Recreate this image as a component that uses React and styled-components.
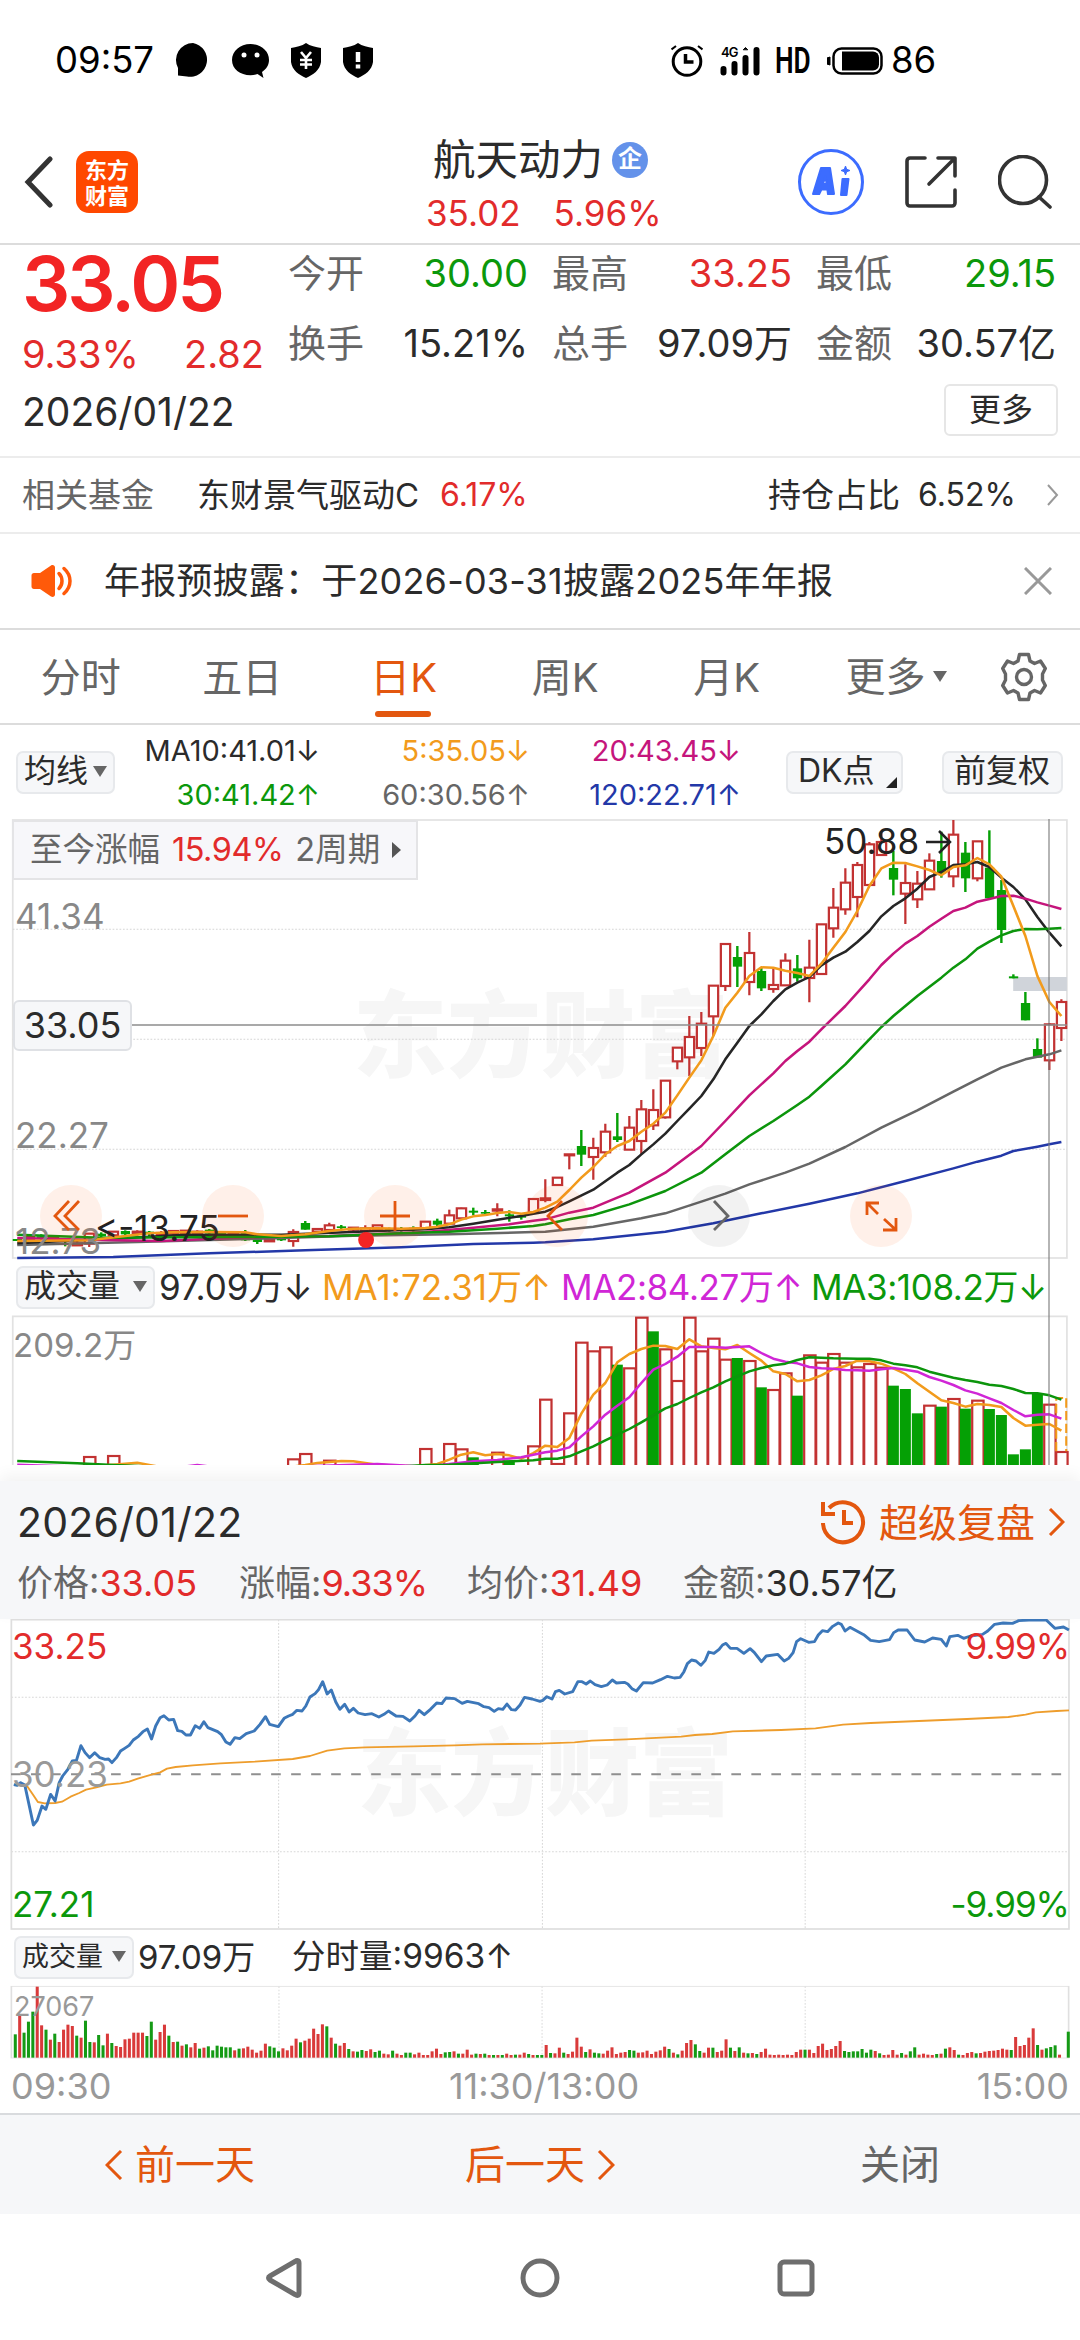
import React from 'react';
import styled, { createGlobalStyle } from 'styled-components';

const RED = '#e22b2b';
const GREEN = '#0b980b';
const ORANGE = '#e3570f';
const DARK = '#2b2b2b';
const GREY = '#666';

// chart data, one slot per trading day
const FIRST_X = 50;
const STEP = 34.85;
const dayX = i => FIRST_X + i * STEP;

// [day, up, body top, body bottom, high, low]
const CANDLES = [
    [0, 0, 1284, 1290, 1284, 1290], [1, 1, 1278, 1284, 1274, 1288], [2, 0, 1276, 1284, 1270, 1290], [3, 1, 1280, 1288, 1276, 1292],
    [4, 0, 1296, 1301, 1290, 1306], [5, 1, 1297, 1303, 1290, 1303], [6, 1, 1268, 1298, 1266, 1308], [7, 0, 1268, 1276, 1264, 1280],
    [8, 1, 1262, 1273, 1262, 1273], [9, 0, 1260, 1270, 1258, 1272], [10, 1, 1262, 1268, 1258, 1274], [11, 0, 1262, 1268, 1260, 1276],
    [12, 1, 1266, 1272, 1260, 1280], [13, 1, 1260, 1268, 1258, 1274], [14, 1, 1259, 1266, 1257, 1270], [15, 1, 1262, 1268, 1258, 1270],
    [16, 0, 1256, 1268, 1254, 1272], [17, 0, 1264, 1270, 1260, 1276], [18, 1, 1268, 1274, 1262, 1280], [19, 0, 1266, 1288, 1257, 1290],
    [20, 0, 1282, 1293, 1278, 1299], [21, 1, 1287, 1291, 1280, 1291], [22, 0, 1280, 1288, 1276, 1290], [23, 1, 1263, 1290, 1255, 1307],
    [24, 0, 1236, 1256, 1230, 1256], [25, 1, 1254, 1262, 1252, 1268], [26, 1, 1243, 1257, 1235, 1262], [27, 0, 1246, 1251, 1242, 1254],
    [28, 1, 1250, 1256, 1248, 1262], [29, 1, 1252, 1260, 1243, 1266], [30, 1, 1243, 1254, 1243, 1258], [31, 0, 1252, 1258, 1250, 1262],
    [32, 0, 1252, 1258, 1248, 1262], [33, 0, 1250, 1257, 1246, 1262], [34, 1, 1232, 1254, 1232, 1254], [35, 0, 1229, 1241, 1223, 1247],
    [36, 1, 1213, 1238, 1196, 1238], [37, 1, 1192, 1222, 1190, 1222], [38, 0, 1199, 1205, 1190, 1213], [39, 0, 1203, 1208, 1197, 1215],
    [40, 1, 1195, 1199, 1177, 1216], [41, 0, 1210, 1216, 1198, 1232], [42, 0, 1214, 1220, 1210, 1226], [43, 1, 1164, 1204, 1164, 1204],
    [44, 1, 1162, 1167, 1105, 1174], [45, 1, 1100, 1122, 1100, 1122], [46, 1, 1030, 1033, 1030, 1075], [47, 0, 1005, 1031, 957, 1065],
    [48, 1, 1011, 1038, 980, 1106], [49, 1, 962, 1024, 938, 1037], [50, 0, 976, 987, 906, 993], [51, 1, 950, 1016, 915, 1016],
    [52, 1, 895, 990, 867, 1030], [53, 1, 897, 943, 835, 957], [54, 1, 809, 919, 809, 923], [55, 1, 710, 751, 710, 775],
    [56, 1, 678, 739, 615, 795], [57, 1, 638, 711, 603, 735], [58, 1, 524, 616, 524, 675], [59, 1, 399, 525, 399, 540],
    [60, 0, 438, 467, 405, 528], [61, 1, 426, 513, 363, 553], [62, 0, 480, 532, 470, 540], [63, 1, 522, 534, 472, 545],
    [64, 1, 449, 523, 427, 523], [65, 0, 472, 502, 432, 512], [66, 1, 470, 501, 386, 574], [67, 1, 340, 489, 340, 489],
    [68, 1, 290, 352, 231, 380], [69, 1, 215, 295, 172, 311], [70, 1, 162, 258, 153, 319], [71, 1, 100, 222, 93, 222],
    [72, 1, 93, 132, 62, 132], [73, 0, 171, 206, 120, 253], [74, 1, 216, 248, 160, 339], [75, 1, 218, 265, 180, 291],
    [76, 1, 149, 235, 127, 235], [77, 0, 150, 187, 62, 200], [78, 1, 71, 196, 27, 229], [79, 0, 125, 202, 93, 243],
    [80, 1, 91, 202, 91, 211], [81, 0, 170, 262, 58, 262], [82, 0, 237, 357, 207, 396], [83, 0, 496, 502, 490, 502],
    [84, 0, 576, 628, 543, 628], [85, 0, 714, 740, 682, 740], [86, 1, 640, 748, 636, 777], [87, 1, 573, 651, 565, 690]
];

const AVERAGES = [
    ['#2338a8', '0:1341 8:1338 16:1327 24:1318 32:1309 38:1299 43:1295 44:1294 48:1285 54:1262 58:1237 62:1207 66:1178 70:1147 74:1110 78:1072 80:1052 82:1034 83:1020 85:1007 86:1000 87:993'],
    ['#666', '0:1302 10:1293 20:1283 28:1274 36:1270 43:1263 44:1262 48:1247 52:1222 54:1207 57:1172 59:1148 61:1120 64:1085 66:1058 69:1008 72:950 75:898 78:842 80:805 82:770 84:745 86:730 87:718'],
    ['#262626', '0:1297 8:1283 14:1271 22:1271 30:1260 34:1255 36:1249 38:1238 40:1226 42:1215 43:1208 44:1202 45:1188 46:1171 48:1136 50:1085 51:1062 52:1030 53:1000 54:968 55:930 56:893 57:855 58:805 59:745 60:695 61:645 62:610 63:570 64:535 65:515 66:498 67:463 68:440 69:422 70:393 71:360 72:316 73:285 74:262 75:233 76:198 77:183 78:162 79:160 80:153 81:168 82:200 83:228 84:265 85:318 86:365 87:406'],
    ['#c5157c', '0:1281 6:1286 12:1290 18:1280 26:1275 34:1263 38:1250 41:1240 43:1229 44:1225 46:1205 48:1190 51:1145 54:1085 57:1005 59:930 61:853 63:787 64:750 65:720 66:692 67:655 69:585 71:505 72:462 73:428 74:398 75:375 76:347 77:323 78:300 79:290 80:272 81:264 82:255 83:254 84:263 85:274 86:284 87:294'],
    ['#0c950c', '0:1271 7:1280 14:1279 20:1278 26:1276 32:1267 36:1262 40:1253 43:1245 44:1240 46:1225 48:1212 51:1180 54:1140 57:1085 59:1030 61:975 63:930 65:882 66:857 67:825 69:760 71:685 72:648 73:615 75:555 77:500 78:470 79:445 80:413 81:392 82:373 83:360 84:354 85:355 86:353 87:351'],
    ['#f29b1c', '0:1290 6:1288 9:1275 11:1267 13:1264 16:1263 19:1264 20:1270 22:1275 24:1270 26:1260 27:1256 28:1253 30:1252 32:1253 34:1251 35:1247 36:1240 37:1226 38:1216 39:1212 40:1206 41:1203 42:1208 43:1203 44:1190 45:1172 46:1137 47:1100 48:1068 49:1030 50:1005 51:990 52:962 53:938 54:905 55:853 56:800 57:748 58:675 59:590 60:545 61:495 62:469 63:470 64:479 65:486 66:495 67:458 68:410 69:363 70:300 71:225 72:172 73:155 74:156 75:166 76:177 77:193 78:168 79:163 80:141 81:160 82:197 83:285 84:375 85:495 86:573 87:615']
];

// [day, up, top]
const VOLUMES = [
    [6, 1, 615], [8, 1, 612], [23, 1, 622], [24, 1, 606], [26, 1, 626], [34, 1, 591], [36, 1, 576], [37, 1, 592], [38, 0, 618],
    [40, 1, 602], [41, 0, 627], [43, 1, 583], [44, 1, 443], [45, 1, 636], [46, 1, 484], [47, 1, 272], [48, 1, 298], [49, 1, 286],
    [50, 0, 340], [51, 1, 349], [52, 1, 197], [53, 0, 240], [54, 1, 292], [55, 1, 387], [56, 1, 197], [57, 1, 298], [58, 1, 260],
    [59, 1, 323], [60, 0, 320], [61, 1, 327], [62, 0, 408], [63, 1, 414], [64, 1, 364], [65, 0, 433], [66, 1, 310], [67, 1, 332],
    [68, 1, 306], [69, 1, 332], [70, 1, 346], [71, 1, 336], [72, 1, 347], [73, 0, 403], [74, 0, 413], [75, 0, 486], [76, 1, 461],
    [77, 0, 466], [78, 1, 441], [79, 0, 472], [80, 1, 446], [81, 0, 473], [82, 0, 491], [83, 0, 609], [84, 0, 594], [85, 0, 427],
    [86, 1, 458], [87, 1, 600]
];

const VOLUME_AVERAGES = [
    ['#f29b1c', '0:660 8:640 9:637 10:634 11:641 14:660 22:650 24:641 25:635 27:629 28:630 30:640 33:645 35:638 36:625 37:610 38:603 39:612 40:608 41:612 42:622 43:605 44:583 45:587 46:560 47:487 48:430 49:395 50:333 51:308 52:293 53:283 54:284 55:293 56:264 57:285 58:290 59:294 60:281 61:305 62:328 63:360 64:368 65:390 66:386 67:372 68:353 69:344 70:328 71:330 72:337 73:351 74:368 75:396 76:421 77:447 78:455 79:466 80:458 81:461 82:467 83:500 84:523 85:520 86:518 87:538'],
    ['#d026d6', '0:640 3:644 13:650 15:641 17:650 24:645 30:638 34:646 36:638 38:630 40:626 42:618 43:610 44:603 45:598 46:588 47:555 48:525 49:490 50:463 51:438 52:395 53:355 54:338 55:316 56:287 57:287 58:287 59:289 60:287 61:285 62:305 63:322 64:331 65:336 66:347 67:351 68:352 69:356 70:357 71:358 72:354 73:350 74:355 75:361 76:377 77:388 78:401 79:417 80:427 81:441 82:455 83:476 84:495 85:490 86:489 87:502'],
    ['#0c950c', '0:629 5:636 8:641 14:650 30:650 34:641 36:640 40:632 43:627 44:622 45:622 46:615 47:600 48:585 49:567 50:550 51:533 52:513 53:492 54:471 55:458 56:440 57:423 58:408 59:390 60:375 61:360 62:350 63:342 64:337 65:326 66:318 68:321 70:322 71:322 72:327 73:337 74:342 75:348 76:361 77:370 78:379 79:386 80:392 81:400 82:404 83:413 84:425 85:426 86:432 87:445']
];

const MINUTE_PRICE = '40,551 50,553 60,545 72,552 97,672 108,658 122,615 133,625 147,580 160,600 172,545 182,525 197,505 210,480 222,478 235,434 247,455 260,470 275,455 290,470 305,475 315,474 325,485 338,470 350,450 362,442 375,433 387,417 402,406 415,392 428,384 440,414 452,375 465,350 476,344 490,357 504,355 516,389 528,391 540,402 553,402 567,374 580,382 592,362 604,380 618,386 632,392 643,401 656,423 668,430 682,410 696,413 715,398 738,390 755,370 771,347 783,370 808,377 825,352 838,345 850,340 862,328 877,330 888,315 900,288 915,278 925,266 937,242 950,279 962,267 975,303 987,325 1001,310 1014,333 1026,322 1040,336 1060,341 1080,338 1100,348 1115,340 1128,330 1150,345 1170,346 1190,360 1205,345 1217,328 1232,341 1250,325 1268,306 1283,308 1295,291 1320,293 1342,307 1357,301 1390,308 1405,317 1420,320 1435,331 1447,323 1460,325 1472,309 1485,326 1497,327 1510,312 1523,289 1545,294 1568,301 1576,298 1588,287 1603,294 1613,272 1624,268 1640,279 1663,272 1678,242 1690,242 1702,249 1714,240 1728,251 1746,257 1763,252 1778,237 1790,246 1813,244 1823,249 1835,263 1848,270 1868,245 1895,246 1918,236 1938,226 1958,231 1975,229 1986,212 1996,188 2008,177 2021,180 2035,193 2048,178 2058,153 2073,157 2088,145 2098,132 2108,127 2121,142 2140,142 2160,157 2178,143 2190,154 2211,182 2225,165 2258,160 2277,180 2290,172 2303,155 2313,122 2325,113 2348,124 2365,122 2376,102 2388,89 2403,92 2418,76 2434,66 2443,70 2454,90 2468,79 2488,90 2508,101 2528,118 2553,122 2583,116 2595,95 2608,87 2634,87 2645,102 2656,117 2685,123 2708,111 2733,115 2748,135 2758,107 2781,103 2798,112 2818,105 2853,100 2868,90 2888,70 2913,66 2940,67 2958,59 2988,57 3038,57 3063,82 3088,78 3104,87';
const MINUTE_AVERAGE = '60,550 80,557 95,580 110,603 130,607 160,606 180,602 205,587 230,576 250,566 280,559 310,551 350,547 375,542 400,533 440,521 465,514 485,503 510,498 560,493 640,487 740,482 850,474 900,465 950,449 1000,442 1060,439 1200,436 1320,433 1400,430 1568,428 1668,424 1718,419 1818,415 1978,407 2018,402 2068,399 2128,391 2268,387 2368,382 2448,371 2528,366 2668,360 2808,354 2928,348 2978,341 3008,334 3068,330 3104,328';

// one bar per minute, negative = sell side
const MINUTE_VOLUME = [
    -70, 125, -75, -108, -138, 213, 97, -84, 54, -72, 47, 84, 99, 95, -66, 60, -111, -47, 46, -68, -37, 72, -44, 35, 32, 55, 57, 75, 75, 75,
    -65, -108, 54, 77, 99, -66, 47, -48, 36, -40, 31, 44, -27, 30, -34, -22, -36, -33, -31, -31, 22, -27, 28, 33, 24, 15, 21, 42, -34, -30,
    -19, 28, 22, 36, 57, -46, 51, 57, 87, 71, 100, -94, 60, -42, 36, 44, -26, 19, -18, -23, 20, 25, -17, -21, 12, 10, -21, 12, 8, -15,
    -15, 10, 15, 8, 8, 19, 27, 11, -16, -17, 19, -12, 12, 24, 9, -12, 11, -12, 8, -8, 8, -8, 12, 8, -9, 9, 15, -11, 8, -8,
    -8, 38, -14, 13, 30, -15, 11, 18, 60, 33, -17, 25, -15, -13, 12, 21, 31, 11, 15, 17, -23, -21, 15, 16, 21, 11, 18, 22, 33, -26,
    15, -10, 21, 44, 53, -40, -20, 15, 30, -30, 17, 21, 55, -30, 20, -31, 15, -13, 14, -11, 17, 27, 9, 8, 9, 8, 9, 8, 17, 24,
    -24, 24, 14, 35, 42, 23, 26, 35, 50, -20, -17, -19, -19, -26, -15, -24, 20, -13, 8, 9, 23, 9, -14, 9, -19, -31, 9, 12, 9, 8,
    -11, 12, -27, 31, 23, -9, 8, 14, 17, -13, 14, 18, 20, 21, 23, 27, 24, -23, 62, 35, 38, 60, 88, -38, 24, -28, -32, -37, 9, 0, -78
];

const toPoints = line => line.split(' ').map(pair => {
    const [day, y] = pair.split(':');
    return `${dayX(Number(day))},${y}`;
}).join(' ');

const KLineChart = () => (
    <ChartSvg height="460" viewBox="0 0 3136 1380" preserveAspectRatio="none">
        <rect x="37" y="27" width="3061" height="1314" fill="none" stroke="#e2e2e2" strokeWidth="5" />
        {[355, 685, 1015].map(y => <line key={y} x1="37" x2="3098" y1={y} y2={y} stroke="#d5d5d5" strokeWidth="3" strokeDasharray="5 5" />)}
        <rect x="2942" y="498" width="156" height="42" fill="#d0d4da" />
        {CANDLES.map(([day, up, top, bottom, high, low]) => {
            const x = dayX(day);
            return up ? (
                <g key={day} stroke="#c23232" strokeWidth="6.500" fill="#fff">
                    <path d={`M${x} ${high}V${top}M${x} ${bottom}V${low}`} />
                    <rect x={x - 13} y={top} width="27" height={bottom - top} />
                </g>
            ) : (
                <g key={day} fill="#05a005">
                    <rect x={x - 3.5} y={high} width="7" height={low - high} />
                    <rect x={x - 13} y={top} width="27" height={bottom - top} />
                </g>
            );
        })}
        {AVERAGES.map(([color, line]) => (
            <polyline key={color} points={toPoints(line)} fill="none" stroke={color} strokeWidth="7.500" strokeLinejoin="round" />
        ))}
        <line x1="380" x2="3098" y1="642" y2="642" stroke="#8c8c8c" strokeWidth="5" />
        <ellipse cx="1063" cy="1287" rx="23" ry="24" fill="#f32424" />
    </ChartSvg>
);

const VolumeChart = () => (
    <ChartSvg height="150" viewBox="0 191 3136 450" preserveAspectRatio="none">
        <path d="M37 700V195H3098V700" fill="none" stroke="#e2e2e2" strokeWidth="5" />
        {VOLUMES.map(([day, up, top]) => (
            up ? <rect key={day} x={dayX(day) - 15} y={top + 2} width="33" height="600" fill="#fff" stroke="#c23232" strokeWidth="6.500" />
                : <rect key={day} x={dayX(day) - 16} y={top} width="32" height="600" fill="#05a005" />
        ))}
        <path d="M3067 600V440H3096V600" fill="none" stroke="#f29b1c" strokeWidth="6" strokeDasharray="28 10" />
        {VOLUME_AVERAGES.map(([color, line]) => (
            <polyline key={color} points={toPoints(line)} fill="none" stroke={color} strokeWidth="7.500" strokeLinejoin="round" />
        ))}
    </ChartSvg>
);

const MinuteChart = () => (
    <ChartSvg height="312" viewBox="0 54 3136 936" preserveAspectRatio="none">
        {[289, 752].map(y => <line key={y} x1="33" x2="3104" y1={y} y2={y} stroke="#d8d8d8" strokeWidth="3" strokeDasharray="5 5" />)}
        {[809, 1575, 2338].map(x => <line key={x} x1={x} x2={x} y1="56" y2="984" stroke="#d8d8d8" strokeWidth="3" strokeDasharray="5 5" />)}
        <rect x="33" y="56" width="3071" height="928" fill="none" stroke="#dedede" strokeWidth="5" />
        <line x1="32" x2="3104" y1="520" y2="520" stroke="#8f8f8f" strokeWidth="6" strokeDasharray="28 30.1" />
        <polyline points={MINUTE_AVERAGE} fill="none" stroke="#ee9d2c" strokeWidth="5.500" strokeLinejoin="round" />
        <polyline points={MINUTE_PRICE} fill="none" stroke="#3c77b9" strokeWidth="8.500" strokeLinejoin="round" />
    </ChartSvg>
);

const MinuteVolumeChart = () => (
    <ChartSvg height="74" viewBox="0 163 1568 222" preserveAspectRatio="none">
        {[405, 787, 1169].map(x => <line key={x} x1={x} x2={x} y1="167" y2="382" stroke="#dcdcdc" strokeWidth="1.5" strokeDasharray="5 5" />)}
        <rect x="16.5" y="167" width="1535" height="215" fill="none" stroke="#e0e0e0" strokeWidth="2.4" />
        {MINUTE_VOLUME.map((v, i) => (
            <rect key={i} x={20 + i * 6.37} y={381 - Math.abs(v)} width="4.4" height={Math.abs(v)} fill={v > 0 ? '#d93a3a' : '#159a15'} />
        ))}
    </ChartSvg>
);

const Chevron = ({ left, size = 16, height = 28, color = ORANGE, width = 3 }) => (
    <svg width={size} height={height} viewBox={`0 0 ${size} ${height}`} fill="none" stroke={color} strokeWidth={width}>
        <path d={left ? `M${size - 2} 1L2 ${height / 2}L${size - 2} ${height - 1}` : `M2 1L${size - 2} ${height / 2}L2 ${height - 1}`} />
    </svg>
);

const Shield = ({ children }) => (
    <svg width="30" height="35" viewBox="0 0 30 35">
        <path d="M15 0C11 3 5 4 0 5V19C1 27 8 32 15 35C22 32 29 27 30 19V5C25 4 19 3 15 0Z" fill="#000" />
        <g stroke="#fff" fill="none">{children}</g>
    </svg>
);

const StatusIcons = () => (
    <NoticeIcons>
        <svg width="34" height="35" viewBox="0 0 34 35"><path d="M17 0a17 17 0 1 1-6 33.500L2 32.500L2 25A17 17 0 0 1 17 0Z" /></svg>
        <svg width="37" height="35" viewBox="0 0 37 35">
            <path d="M18.500 1C29 1 37 8 37 17c0 5-2.500 9-7 12l1.500 6l-6-4c-2 .8-4.500 1.200-7 1.200C8 32.200 0 26 0 17S8 1 18.500 1Z" />
            <circle cx="12" cy="12" r="2.500" fill="#fff" /><circle cx="25" cy="12" r="2.500" fill="#fff" />
        </svg>
        <Shield><path d="M10 9l5 6l5-6M15 15v11M9 17h12M9 21.500h12" strokeWidth="2.600" /></Shield>
        <Shield><path d="M15 9v10M15 21.500v4" strokeWidth="4.500" /></Shield>
    </NoticeIcons>
);

const SystemIcons = () => (
    <SystemStatus>
        <svg width="32" height="32" viewBox="0 0 32 32" fill="none" stroke="#000" strokeWidth="3">
            <circle cx="16" cy="16.500" r="13.800" /><path d="M14.500 9v8h8" strokeWidth="3.500" /><path d="M0.500 4.500L5 1M31.500 4.500L27 1" strokeWidth="2" />
        </svg>
        <Signal>
            <SignalLabel>4G</SignalLabel>
            <svg width="40" height="30" viewBox="0 0 40 30" stroke="#000" strokeWidth="6" strokeLinecap="round">
                <path d="M3.500 23v3.500M14.500 18v8.500M25.500 12v14.500M36.500 4v22.500" /><path d="M23.500 3.500l2-2l2 2z" strokeWidth="1" />
            </svg>
        </Signal>
        <Hd>HD</Hd>
        <svg width="56" height="28" viewBox="0 0 56 28">
            <path d="M3 10v8a4 4 0 0 1 0-8Z" stroke="#000" />
            <rect x="6.500" y="1.500" width="48" height="25" rx="8" fill="none" stroke="#000" strokeWidth="2.500" />
            <path d="M15 4.500h31a6 6 0 0 1 6 6v7a6 6 0 0 1-6 6H15Z" />
        </svg>
        <Battery>86</Battery>
    </SystemStatus>
);

const ToolIcons = () => (
    <Tools>
        <AiBadge>
            <svg width="40" height="32" viewBox="0 0 40 32" fill="#3c6cff" stroke="#3c6cff" strokeLinejoin="round" strokeWidth="2">
                <path fillRule="evenodd" d="M10 2h9l4 26h-6l-.6-4.500h-6L8.200 28H2Zm4.500 8l-2.500 8h3.600Z" />
                <path d="M31.500 13h6l-2 16h-5.500Z" /><path d="M34.500 0l1.200 3.300l3.300 1.200l-3.300 1.200L34.500 9l-1.200-3.300L30 4.500l3.300-1.200Z" strokeWidth="1" />
            </svg>
        </AiBadge>
        <svg width="52" height="52" viewBox="0 0 52 52" fill="none" stroke="#333" strokeWidth="3.600" strokeLinecap="round" strokeLinejoin="round">
            <path d="M20 2H5a3 3 0 0 0-3 3v42a3 3 0 0 0 3 3h42a3 3 0 0 0 3-3V34M33 2h17v18M49 3L24 28" />
        </svg>
        <svg width="54" height="54" viewBox="0 0 54 54" fill="none" stroke="#333" strokeWidth="3.600" strokeLinecap="round">
            <circle cx="25" cy="25" r="23.500" /><path d="M41 42l11 10" />
        </svg>
    </Tools>
);

const Gear = () => (
    <svg width="50" height="50" viewBox="0 0 50 50" fill="none" stroke={GREY} strokeWidth="3.400" strokeLinejoin="round">
        <path d="M20.500 2.500h9l1.500 6.500l4.500 2.500l6-2.500l4.800 7.500l-2.800 5.500v6l2.800 5.500l-4.800 7.500l-6-2.500l-4.500 2.500l-1.500 6.500h-9l-1.500-6.500l-4.500-2.500l-6 2.500l-4.800-7.500l2.800-5.500v-6l-2.800-5.500l4.800-7.500l6 2.500l4.500-2.500Z" />
        <circle cx="25" cy="25" r="7.500" />
    </svg>
);

const Speaker = () => (
    <svg width="42" height="34" viewBox="0 0 42 34" fill="none" stroke="#ff5a0a" strokeWidth="3.500">
        <path d="M3 9h6L20 1.500c2-1 4 0 4 2v27c0 2-2 3-4 2L9 25H3c-1.500 0-2.500-1-2.500-2.500v-11C.5 10 1.500 9 3 9Z" fill="#ff5a0a" stroke="none" />
        <path d="M28 9.500c4 4 4 11 0 15M33 4.500c8 7 8 18 0 25" strokeLinecap="round" />
    </svg>
);

const CHART_BUTTONS = [
    ['first', 'M29 16L15 31L29 45M39 16L25 31L39 45'],
    ['minus', 'M16 31H46'],
    ['plus', 'M16 31H46M31 16V46'],
    ['prev', 'M36 16L22 31L36 45'],
    ['next', 'M26 16L40 31L26 45'],
    ['full', 'M17 30V18H29M17 18L28 29M33 45H46V33M46 45L34 34']
];

const TABS = ['分时', '五日', '日K', '周K', '月K'];

const App = () => (
    <Page>
        <GlobalStyle />
        <StatusBar>
            <Clock>09:57</Clock>
            <StatusIcons />
            <SystemIcons />
        </StatusBar>
        <Header>
            <BackGroup>
                <svg width="30" height="52" viewBox="0 0 30 52" fill="none" stroke="#333" strokeWidth="5" strokeLinecap="round">
                    <path d="M26 3L4 26L26 49" />
                </svg>
                <Brand>东方<br />财富</Brand>
            </BackGroup>
            <StockTitle>
                <StockName>航天动力<Company>企</Company></StockName>
                <StockPrice><span>35.02</span><span>5.96%</span></StockPrice>
            </StockTitle>
            <ToolIcons />
        </Header>
        <Quote>
            <QuoteMain>
                <Price>33.05</Price>
                <Change><span>9.33%</span><span>2.82</span></Change>
                <QuoteDate>2026/01/22</QuoteDate>
            </QuoteMain>
            <QuoteSide>
                <Stats>
                    <Stat>今开<Value color={GREEN}>30.00</Value></Stat>
                    <Stat>最高<Value color={RED}>33.25</Value></Stat>
                    <Stat>最低<Value color={GREEN}>29.15</Value></Stat>
                    <Stat>换手<Value>15.21%</Value></Stat>
                    <Stat>总手<Value>97.09万</Value></Stat>
                    <Stat>金额<Value>30.57亿</Value></Stat>
                </Stats>
                <MoreButton>更多</MoreButton>
            </QuoteSide>
        </Quote>
        <FundRow>
            <FundLabel>相关基金</FundLabel>
            <FundName>东财景气驱动C</FundName>
            <FundRate>6.17%</FundRate>
            <Holding>持仓占比</Holding>
            <HoldingRate>6.52%</HoldingRate>
            <Chevron size={13} height={22} color="#999" width={2} />
        </FundRow>
        <NoticeRow>
            <Speaker />
            <NoticeText>年报预披露：于2026-03-31披露2025年年报</NoticeText>
            <svg width="28" height="28" viewBox="0 0 28 28" stroke="#999" strokeWidth="3"><path d="M1 1L27 27M27 1L1 27" /></svg>
        </NoticeRow>
        <TabBar>
            {TABS.map(tab => <Tab key={tab} active={tab === '日K' ? 1 : 0}>{tab}</Tab>)}
            <MoreTab>更多<Triangle size={7} /></MoreTab>
            <Gear />
        </TabBar>
        <AverageRow>
            <Pill width={99}>均线<Triangle size={7} /></Pill>
            <AverageGrid>
                <Average color="#2b2b2b">MA10:41.01↓</Average>
                <Average color="#f29b1c">5:35.05↓</Average>
                <Average color="#c5157c">20:43.45↓</Average>
                <Average color={GREEN}>30:41.42↑</Average>
                <Average color={GREY}>60:30.56↑</Average>
                <Average color="#2338a8">120:22.71↑</Average>
            </AverageGrid>
            <PillGroup>
                <Pill width={117} pad={10}>DK点<Corner /></Pill>
                <Pill width={121} pad={10}>前复权</Pill>
            </PillGroup>
        </AverageRow>
        <KLineArea>
            <KLineBox>
                <Watermark top={170} left={353}>东方财富</Watermark>
                <KLineChart />
                <Period>至今涨幅<PeriodRate>15.94%</PeriodRate>2周期
                    <svg width="9" height="16" viewBox="0 0 9 16"><path d="M0 0L9 8L0 16Z" fill="#555" /></svg>
                </Period>
                <AxisLabel top={80} left={15}>41.34</AxisLabel>
                <AxisLabel top={299} left={15}>22.27</AxisLabel>
                <AxisLabel top={405} left={15}>12.73</AxisLabel>
                <CursorPrice>33.05</CursorPrice>
                <LowMark>&lt;-13.75</LowMark>
                <HighMark>50.88
                    <svg width="26" height="24" viewBox="0 0 26 24" fill="none" stroke="#222" strokeWidth="2.500"><path d="M0 12H24M13 1L24 12L13 23" /></svg>
                </HighMark>
                <ChartButtons>
                    {CHART_BUTTONS.map(([name, path]) => (
                        <ChartButton key={name} muted={name === 'next' ? 1 : 0}>
                            <svg width="62" height="62" viewBox="0 0 62 62" fill="none" strokeWidth="2.800"><path d={path} /></svg>
                        </ChartButton>
                    ))}
                </ChartButtons>
            </KLineBox>
            <VolumeHeader>
                <Pill width={139}>成交量<Triangle size={7} /></Pill>
                <VolumeText color="#2b2b2b" width={163}>97.09万↓</VolumeText>
                <VolumeText color="#f29b1c" width={239}>MA1:72.31万↑</VolumeText>
                <VolumeText color="#d026d6" width={250} tight={1}>MA2:84.27万↑</VolumeText>
                <VolumeText color={GREEN} tight={1}>MA3:108.2万↓</VolumeText>
            </VolumeHeader>
            <VolumeBox>
                <VolumeChart />
                <VolumeMax>209.2万</VolumeMax>
            </VolumeBox>
            <CrossLine />
        </KLineArea>
        <DayPanel>
            <DayHead>
                <DayDate>2026/01/22</DayDate>
                <Review>
                    <svg width="46" height="46" viewBox="0 0 46 46" fill="none" stroke={ORANGE} strokeWidth="4">
                        <path d="M3 24A20 20 0 1 0 9 9" /><path d="M3 3v12h12" /><path d="M24 11v13h9" />
                    </svg>
                    超级复盘
                    <Chevron size={17} height={28} />
                </Review>
            </DayHead>
            <DayStats>
                <span>价格:<Em color={RED}>33.05</Em></span>
                <span>涨幅:<Em color={RED} tight={1}>9.33%</Em></span>
                <span>均价:<Em color={RED}>31.49</Em></span>
                <span>金额:<Em color={DARK}>30.57亿</Em></span>
            </DayStats>
        </DayPanel>
        <MinuteBox>
            <Watermark top={108} left={357}>东方财富</Watermark>
            <MinuteChart />
            <AxisLabel top={10} left={12} color={RED}>33.25</AxisLabel>
            <AxisLabel top={138} left={12} color="#999">30.23</AxisLabel>
            <AxisLabel top={268} left={12} color={GREEN}>27.21</AxisLabel>
            <AxisLabel top={10} right={11} color={RED}>9.99%</AxisLabel>
            <AxisLabel top={268} right={11} color={GREEN}>-9.99%</AxisLabel>
        </MinuteBox>
        <MinuteVolumeHeader>
            <Pill width={120} small={1}>成交量<Triangle size={7} /></Pill>
            <MinuteTotal>97.09万</MinuteTotal>
            <MinuteVolumeText>分时量:9963↑</MinuteVolumeText>
        </MinuteVolumeHeader>
        <MinuteVolumeBox>
            <MinuteVolumeChart />
            <MinuteMax>27067</MinuteMax>
        </MinuteVolumeBox>
        <TimeAxis><span>09:30</span><span>11:30/13:00</span><span>15:00</span></TimeAxis>
        <DayNav>
            <DayLink color={ORANGE}><Chevron left size={18} height={30} />前一天</DayLink>
            <DayLink color={ORANGE}>后一天<Chevron size={18} height={30} /></DayLink>
            <DayLink color={GREY}>关闭</DayLink>
        </DayNav>
        <SystemNav>
            <svg width="40" height="42" viewBox="0 0 40 42" fill="none" stroke="#6e6e6e" strokeWidth="5" strokeLinejoin="round">
                <path d="M35 6c0-3-2-3-4-1.500L6 19c-2 1.200-2 2.800 0 4l25 14.500c2 1.500 4 1.500 4-1.500Z" />
            </svg>
            <svg width="40" height="40" viewBox="0 0 40 40" fill="none" stroke="#6e6e6e" strokeWidth="5"><circle cx="20" cy="20" r="17" /></svg>
            <svg width="40" height="40" viewBox="0 0 40 40" fill="none" stroke="#6e6e6e" strokeWidth="5"><rect x="4" y="4" width="32" height="32" rx="4" /></svg>
        </SystemNav>
    </Page>
);

const GlobalStyle = createGlobalStyle`
    * {
        box-sizing: border-box;
    }

    body {
        margin: 0;
        background: #fff;
    }

    svg {
        display: block;
        flex: none;
    }
`;

const Page = styled.div`
    width: 1080px;
    height: 2340px;
    overflow: hidden;
    background: #fff;
    color: ${DARK};
    font-family: Inter, 'Noto Sans CJK SC', sans-serif;
    font-size: 36px;
    line-height: 1;
    white-space: nowrap;
    display: flex;
    flex-direction: column;

    & > * {
        flex: none;
    }
`;

const StatusBar = styled.div`
    height: 120px;
    display: flex;
    align-items: center;
    padding: 1px 0 0 55px;
    color: #000;
`;

const Clock = styled.div`
    width: 121px;
    font-size: 36.500px;
`;

const NoticeIcons = styled.div`
    display: flex;
    width: 495px;
    gap: 22px;
`;

const SystemStatus = styled.div`
    display: flex;
    align-items: center;
`;

const Signal = styled.div`
    position: relative;
    margin-left: 17px;
`;

const SignalLabel = styled.div`
    position: absolute;
    left: 1px;
    top: 0;
    font-size: 13px;
    font-weight: 600;
    letter-spacing: -1px;
`;

const Hd = styled.div`
    width: 34px;
    margin: 0 18px 0 15px;
    font-family: Roboto, sans-serif;
    font-size: 36px;
    font-weight: 600;
    transform: scaleX(0.73);
    transform-origin: left;
`;

const Battery = styled.div`
    margin-left: 8px;
    font-size: 36.500px;
`;

const Header = styled.div`
    height: 125px;
    border-bottom: 2px solid #dcdcdc;
    display: grid;
    grid-template-columns: 400px 280px 1fr;
`;

const BackGroup = styled.div`
    display: flex;
    align-items: center;
    padding-left: 24px;
    gap: 22px;
`;

const Brand = styled.div`
    width: 62px;
    height: 62px;
    padding-top: 4px;
    border-radius: 13px;
    background: #ff4800;
    color: #fff;
    font-family: 'Noto Sans CJK SC', sans-serif;
    font-size: 22px;
    font-weight: 700;
    line-height: 26px;
    text-align: center;
`;

const StockTitle = styled.div`
    padding: 18px 0 0 33px;
`;

const StockName = styled.div`
    display: flex;
    align-items: center;
    gap: 9px;
    height: 44px;
    font-size: 42.500px;
`;

const Company = styled.div`
    width: 36px;
    height: 36px;
    border-radius: 50%;
    background: #6492ea;
    color: #fff;
    font-size: 24px;
    font-weight: 700;
    line-height: 34px;
    text-align: center;
`;

const StockPrice = styled.div`
    display: flex;
    gap: 33px;
    margin: 14px 0 0 -7px;
    color: ${RED};
    font-size: 35px;
`;

const Tools = styled.div`
    display: flex;
    align-items: center;
    padding-left: 118px;
    gap: 41px;
`;

const AiBadge = styled.div`
    width: 66px;
    height: 66px;
    border: 3px solid #3c6cff;
    border-radius: 50%;
    display: flex;
    align-items: center;
    justify-content: center;
`;

const Quote = styled.div`
    height: 213px;
    border-bottom: 2px solid #ececec;
    display: flex;
`;

const QuoteMain = styled.div`
    width: 288px;
    padding: 0 24px 0 22px;
`;

const Price = styled.div`
    height: 78px;
    font-size: 76px;
    font-weight: 600;
    line-height: 77px;
    letter-spacing: -3px;
    color: #f22424;
`;

const Change = styled.div`
    display: flex;
    justify-content: space-between;
    height: 60px;
    font-size: 38px;
    line-height: 62px;
    color: ${RED};
`;

const QuoteDate = styled.div`
    font-size: 39px;
    line-height: 58px;
`;

const QuoteSide = styled.div`
    flex: 1;
    padding: 0 22px 0 0;
`;

const Stats = styled.div`
    display: grid;
    grid-template-columns: 240px 240px 240px;
    column-gap: 24px;
    grid-auto-rows: 70px;
    height: 139px;
    margin-top: -7px;
`;

const Stat = styled.div`
    display: flex;
    align-items: center;
    justify-content: space-between;
    color: ${GREY};
    font-size: 38px;
`;

const Value = styled.span`
    color: ${props => props.color || DARK};
    font-size: 38px;
`;

const MoreButton = styled.div`
    width: 114px;
    height: 52px;
    margin: 7px 0 0 auto;
    border: 2px solid #e6e6e6;
    border-radius: 6px;
    font-size: 32px;
    line-height: 48px;
    text-align: center;
`;

const FundRow = styled.div`
    height: 76px;
    border-bottom: 2px solid #ececec;
    padding: 0 21px 0 22px;
    display: flex;
    align-items: center;
    font-size: 33px;
`;

const FundLabel = styled.span`
    width: 175px;
    color: ${GREY};
`;

const FundName = styled.span`
    width: 243px;
`;

const FundRate = styled.span`
    flex: 1;
    font-size: 32px;
    color: ${RED};
`;

const Holding = styled.span`
    width: 150px;
`;

const HoldingRate = styled.span`
    width: 128px;
    font-size: 32px;
`;

const NoticeRow = styled.div`
    height: 96px;
    border-bottom: 2px solid #dcdcdc;
    padding: 0 28px 0 31px;
    display: flex;
    align-items: center;
`;

const NoticeText = styled.div`
    flex: 1;
    margin-left: 31px;
    font-size: 36px;
    letter-spacing: 0.2px;
`;

const TabBar = styled.div`
    height: 95px;
    border-bottom: 2px solid #dcdcdc;
    padding-right: 31px;
    display: flex;
    align-items: center;
`;

const Tab = styled.div`
    position: relative;
    width: 161.500px;
    height: 95px;
    text-align: center;
    line-height: 97px;
    font-size: 40px;
    color: ${props => props.active ? ORANGE : GREY};

    &::after {
        content: '';
        display: ${props => props.active ? 'block' : 'none'};
        position: absolute;
        left: 52px;
        bottom: 7px;
        width: 56px;
        height: 6px;
        border-radius: 3px;
        background: ${ORANGE};
    }
`;

const MoreTab = styled.div`
    display: flex;
    align-items: center;
    gap: 7px;
    flex: 1;
    padding-left: 38px;
    color: ${GREY};
    font-size: 40px;
`;

const Triangle = styled.i`
    border: ${props => props.size}px solid transparent;
    border-top: ${props => props.size * 1.65}px solid #666;
    border-bottom: 0;
`;

const AverageRow = styled.div`
    height: 94px;
    padding: 0 17px 0 16px;
    display: flex;
    align-items: center;
`;

const Pill = styled.div`
    position: relative;
    width: ${props => props.width}px;
    height: 43px;
    padding: 0 6px 2px ${props => props.pad || 6}px;
    border: 2px solid #e7e9ec;
    border-radius: 7px;
    background: #f6f7f9;
    display: flex;
    align-items: center;
    justify-content: space-between;
    font-size: ${props => props.small ? 27 : 32}px;
`;

const PillGroup = styled.div`
    display: flex;
    gap: 39px;
    margin-left: auto;
`;

const Corner = styled.i`
    position: absolute;
    right: 4px;
    bottom: 4px;
    border-left: 11px solid transparent;
    border-bottom: 11px solid #222;
`;

const AverageGrid = styled.div`
    display: grid;
    grid-template-columns: 205px 210px 211px;
    row-gap: 15px;
`;

const Average = styled.div`
    display: flex;
    justify-content: flex-end;
    color: ${props => props.color};
    font-size: 29px;
`;

const KLineArea = styled.div`
    position: relative;
    height: 646px;
`;

const ChartSvg = styled.svg`
    position: relative;
    width: 1080px;
    height: ${props => props.height}px;
`;

const KLineBox = styled.div`
    position: relative;
    height: 440px;
    display: flex;
    align-items: flex-start;

    & > svg {
        margin-top: -8px;
    }
`;

const Watermark = styled.div`
    position: absolute;
    top: ${props => props.top}px;
    left: ${props => props.left}px;
    font-size: 94px;
    font-weight: 900;
    color: #f6f6f6;
`;

const Period = styled.div`
    position: absolute;
    left: 12px;
    top: 1px;
    width: 406px;
    height: 60px;
    padding-left: 16px;
    border: 2px solid #e4e4e6;
    background: #f7f7fa;
    display: flex;
    align-items: center;
    gap: 12px;
    color: ${GREY};
    font-size: 32.500px;
`;

const PeriodRate = styled.span`
    color: ${RED};
    letter-spacing: -0.5px;
`;

const AxisLabel = styled.div`
    position: absolute;
    top: ${props => props.top}px;
    ${props => props.right ? `right: ${props.right}px; letter-spacing: -1px` : `left: ${props.left}px`};
    font-size: 35px;
    color: ${props => props.color || '#888'};
`;

const CursorPrice = styled.div`
    position: absolute;
    left: 13px;
    top: 181px;
    width: 119px;
    height: 51px;
    border: 2px solid #dfe1e5;
    border-radius: 6px;
    background: #f6f7f9;
    font-size: 36px;
    line-height: 47px;
    text-align: center;
`;

const LowMark = styled.div`
    position: absolute;
    left: 95px;
    top: 392px;
    font-size: 35px;
    color: #222;
`;

const HighMark = styled.div`
    position: absolute;
    left: 824px;
    top: 5px;
    display: flex;
    align-items: center;
    gap: 7px;
    font-size: 35px;
    color: #222;
`;

const ChartButtons = styled.div`
    position: absolute;
    left: 40px;
    top: 366px;
    display: flex;
    gap: 100px;
`;

const ChartButton = styled.div`
    width: 62px;
    height: 62px;
    border-radius: 50%;
    background: ${props => props.muted ? 'rgba(0, 0, 0, 0.05)' : 'rgba(255, 90, 10, 0.09)'};

    & svg {
        stroke: ${props => props.muted ? '#666' : ORANGE};
    }
`;

const VolumeHeader = styled.div`
    height: 56px;
    padding-left: 16px;
    display: flex;
    align-items: center;

    & > div:first-child {
        margin-right: 4px;
    }
`;

const VolumeText = styled.div`
    width: ${props => props.width ? `${props.width}px` : 'auto'};
    color: ${props => props.color};
    font-size: 35px;
    letter-spacing: ${props => props.tight ? '-0.4px' : 'normal'};
`;

const VolumeBox = styled.div`
    position: relative;
    height: 150px;
`;

const VolumeMax = styled.div`
    position: absolute;
    left: 13px;
    top: 14px;
    color: #888;
    font-size: 33px;
`;

const CrossLine = styled.div`
    position: absolute;
    left: 1048px;
    top: 0;
    width: 2px;
    height: 646px;
    background: rgba(120, 120, 120, 0.55);
`;

const DayPanel = styled.div`
    height: 138px;
    margin-top: 16px;
    background: #f6f7f9;
    box-shadow: 0 -6px 14px rgba(0, 0, 0, 0.05);
`;

const DayHead = styled.div`
    height: 82px;
    padding: 0 15px 0 17px;
    display: flex;
    align-items: center;
    justify-content: space-between;
`;

const DayDate = styled.div`
    font-size: 41px;
    letter-spacing: 0.2px;
`;

const Review = styled.div`
    display: flex;
    align-items: center;
    gap: 13px;
    color: ${ORANGE};
    font-size: 39px;
`;

const DayStats = styled.div`
    display: grid;
    grid-template-columns: 222px 228px 216px 1fr;
    padding: 2px 0 0 17px;
    color: ${GREY};
    font-size: 36px;
`;

const Em = styled.span`
    color: ${props => props.color};
    letter-spacing: ${props => props.tight ? '-1px' : 'normal'};
`;

const MinuteBox = styled.div`
    position: relative;
    height: 312px;
`;

const MinuteVolumeHeader = styled.div`
    height: 54px;
    padding: 0 0 2px 14px;
    display: flex;
    align-items: center;
`;

const MinuteTotal = styled.div`
    width: 154px;
    margin-left: 4px;
    font-size: 33px;
`;

const MinuteVolumeText = styled.div`
    font-size: 33.500px;
`;

const MinuteVolumeBox = styled.div`
    position: relative;
    height: 74px;
`;

const MinuteMax = styled.div`
    position: absolute;
    left: 14px;
    top: 8px;
    color: #999;
    font-size: 27px;
`;

const TimeAxis = styled.div`
    height: 54px;
    padding: 0 11px;
    display: flex;
    align-items: center;
    justify-content: space-between;
    font-size: 36px;
    color: #999;
`;

const DayNav = styled.div`
    height: 101px;
    border-top: 2px solid #d9dbde;
    background: #f6f7f9;
    display: grid;
    grid-template-columns: 1fr 1fr 1fr;
`;

const DayLink = styled.div`
    display: flex;
    align-items: center;
    justify-content: center;
    gap: 12px;
    color: ${props => props.color};
    font-size: 40px;
`;

const SystemNav = styled.div`
    height: 127px;
    padding: 0 264px;
    display: flex;
    align-items: center;
    justify-content: space-between;
`;

export default App;
